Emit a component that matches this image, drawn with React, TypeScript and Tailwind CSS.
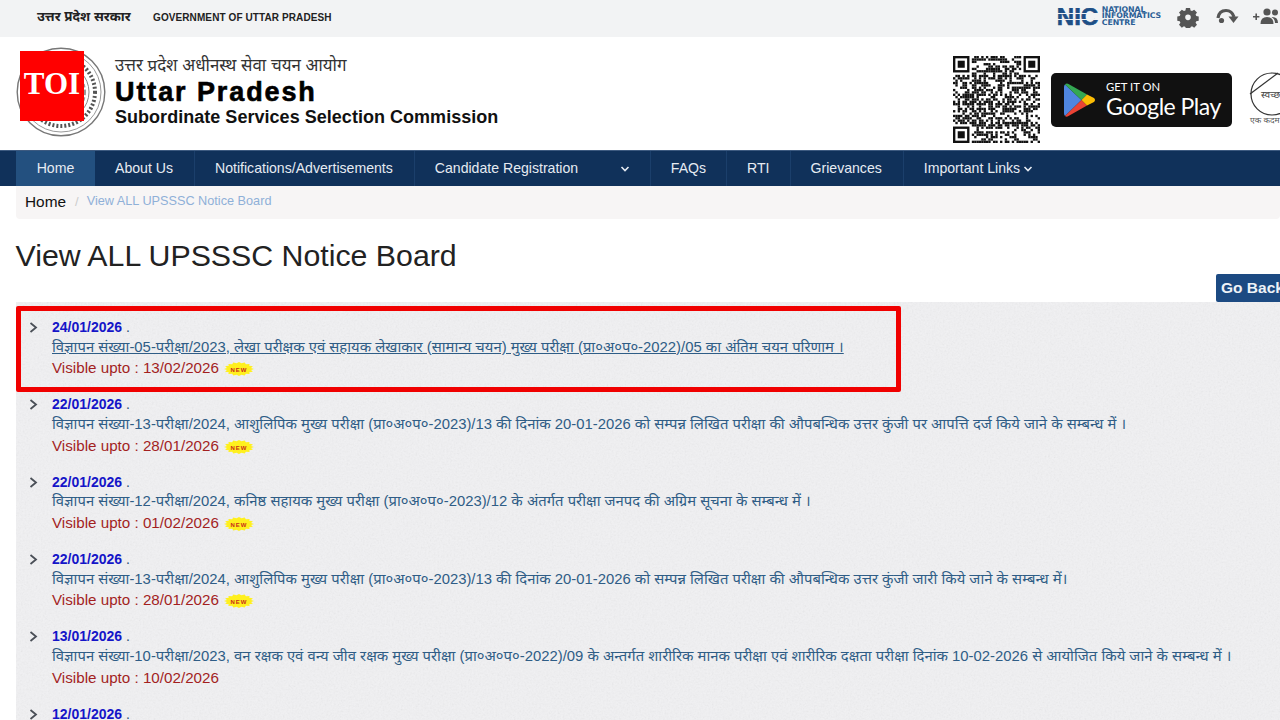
import React from "react";

const FONT = "font-['Liberation_Sans','Noto_Sans','DejaVu_Sans',sans-serif]";

const notices = [
  { date: "24/01/2026", text: "विज्ञापन संख्या-05-परीक्षा/2023, लेखा परीक्षक एवं सहायक लेखाकार (सामान्य चयन) मुख्य परीक्षा (प्रा०अ०प०-2022)/05 का अंतिम चयन परिणाम ।", upto: "13/02/2026", isNew: true, underline: true },
  { date: "22/01/2026", text: "विज्ञापन संख्या-13-परीक्षा/2024, आशुलिपिक मुख्य परीक्षा (प्रा०अ०प०-2023)/13 की दिनांक 20-01-2026 को सम्पन्न लिखित परीक्षा की औपबन्धिक उत्तर कुंजी पर आपत्ति दर्ज किये जाने के सम्बन्ध में ।", upto: "28/01/2026", isNew: true },
  { date: "22/01/2026", text: "विज्ञापन संख्या-12-परीक्षा/2024, कनिष्ठ सहायक मुख्य परीक्षा (प्रा०अ०प०-2023)/12 के अंतर्गत परीक्षा जनपद की अग्रिम सूचना के सम्बन्ध में ।", upto: "01/02/2026", isNew: true },
  { date: "22/01/2026", text: "विज्ञापन संख्या-13-परीक्षा/2024, आशुलिपिक मुख्य परीक्षा (प्रा०अ०प०-2023)/13 की दिनांक 20-01-2026 को सम्पन्न लिखित परीक्षा की औपबन्धिक उत्तर कुंजी जारी किये जाने के सम्बन्ध में।", upto: "28/01/2026", isNew: true },
  { date: "13/01/2026", text: "विज्ञापन संख्या-10-परीक्षा/2023, वन रक्षक एवं वन्य जीव रक्षक मुख्य परीक्षा (प्रा०अ०प०-2022)/09 के अन्तर्गत शारीरिक मानक परीक्षा एवं शारीरिक दक्षता परीक्षा दिनांक 10-02-2026 से आयोजित किये जाने के सम्बन्ध में ।", upto: "10/02/2026" },
  { date: "12/01/2026", text: "", upto: "" },
];

function Chevron({ className = "" }: { className?: string }) {
  return (
    <svg viewBox="0 0 10 10" className={className} fill="none" stroke="currentColor" strokeWidth="1.6">
      <path d="M1.5 3 L5 6.5 L8.5 3" />
    </svg>
  );
}

function NewBadge() {
  const pts: string[] = [];
  const n = 16;
  for (let i = 0; i < n * 2; i++) {
    const a = (i * Math.PI) / n;
    const r = i % 2 ? 0.82 : 1;
    pts.push(`${15 + 15 * r * Math.cos(a)},${7 + 7 * r * Math.sin(a)}`);
  }
  return (
    <svg width="30" height="14" viewBox="0 0 30 14" className="ml-[5px] mt-[3px]">
      <polygon points={pts.join(" ")} fill="#fff01e" />
      <text x="15" y="9.5" textAnchor="middle" fontSize="6" fontWeight="700" fill="#c92a1a" fontFamily="Liberation Sans" letterSpacing="1">NEW</text>
    </svg>
  );
}

function QR() {
  const size = 37;
  const cells: React.ReactElement[] = [];
  let s = 12345;
  const inFinder = (x: number, y: number) =>
    (x < 8 && y < 8) || (x > size - 9 && y < 8) || (x < 8 && y > size - 9);
  for (let y = 0; y < size; y++) {
    for (let x = 0; x < size; x++) {
      s = (s * 1103515245 + 12345) & 0x7fffffff;
      if (!inFinder(x, y) && (s >> 16) % 100 < 52) {
        cells.push(<rect key={`${x}-${y}`} x={x} y={y} width="1" height="1" />);
      }
    }
  }
  const finder = (x: number, y: number) => (
    <g key={`${x}${y}`}>
      <rect x={x} y={y} width="7" height="7" />
      <rect x={x + 1} y={y + 1} width="5" height="5" fill="#fff" />
      <rect x={x + 2} y={y + 2} width="3" height="3" />
    </g>
  );
  return (
    <svg viewBox={`0 0 ${size} ${size}`} width="87" height="87" fill="#111">
      {cells}
      {finder(0, 0)}
      {finder(size - 7, 0)}
      {finder(0, size - 7)}
    </svg>
  );
}

function PlayLogo() {
  return (
    <svg width="32" height="36" viewBox="0 0 32 36">
      <path d="M1 2.5 L17.5 18 L1 34 Q0 33 0 31 L0 5 Q0 3 1 2.5Z" fill="#4f86e0" />
      <path d="M1 2.5 Q2.5 1 4.5 2 L23 12.5 L17.5 18Z" fill="#34a853" />
      <path d="M1 34 Q2.5 35.5 4.5 34 L23 23.5 L17.5 18Z" fill="#ea4335" />
      <path d="M23 12.5 L30 16 Q32 18 30 20 L23 23.5 L17.5 18Z" fill="#fbbc04" />
    </svg>
  );
}

function Emblem() {
  return (
    <svg width="90" height="90" viewBox="0 0 90 90">
      <circle cx="45" cy="45" r="43.8" fill="#fff" stroke="#777" strokeWidth="1.4" />
      <circle cx="45" cy="45" r="40" fill="none" stroke="#999" strokeWidth="1" />
      <circle cx="45" cy="45" r="34" fill="none" stroke="#555" strokeWidth="4" strokeDasharray="2 2" />
      <circle cx="45" cy="45" r="28" fill="none" stroke="#888" strokeWidth="1" />
      <circle cx="45" cy="45" r="22" fill="none" stroke="#999" strokeWidth="6" strokeDasharray="3 2" />
    </svg>
  );
}

function Swachh() {
  return (
    <svg width="32" height="56" viewBox="0 0 32 56">
      <circle cx="24" cy="22" r="21" fill="none" stroke="#333" strokeWidth="1.2" />
      <path d="M2 22 L30 1" stroke="#333" strokeWidth="1.2" />
      <text x="13" y="26" fontSize="9.5" fill="#444" fontFamily="Noto Sans, sans-serif">स्वच्छ</text>
      <text x="2" y="51" fontSize="8.5" fill="#555" fontFamily="Noto Sans, sans-serif">एक कदम</text>
    </svg>
  );
}

function NicLogo() {
  return (
    <div className="flex items-center gap-[3px]">
      <div className="relative h-[18px] w-[42px] overflow-hidden">
        <span className="block text-[24px] leading-[18px] font-bold text-[#1d4f86] [-webkit-text-stroke:0.6px_#1d4f86]">NIC</span>
        <div className="absolute left-0 right-0 top-[5px] h-px bg-[#f2f3f4]" />
        <div className="absolute left-0 right-0 top-[11px] h-px bg-[#f2f3f4]" />
      </div>
      <div className="text-[7.8px] leading-[6.5px] font-bold text-[#2b5f96] font-['DejaVu_Sans',sans-serif] tracking-[-0.1px]">
        <div>NATIONAL</div>
        <div>INFORMATICS</div>
        <div>CENTRE</div>
      </div>
    </div>
  );
}

function TopIcons() {
  return (
    <div className="flex items-center">
      <svg width="22" height="22" viewBox="0 0 24 24" fill="#555" className="ml-[16px]">
        <path fillRule="evenodd" d="M9.5 1h5l.6 3 1.8.8 2.6-1.7 3.4 3.4-1.7 2.6.8 1.8 3 .6v5l-3 .6-.8 1.8 1.7 2.6-3.4 3.4-2.6-1.7-1.8.8-.6 3h-5l-.6-3-1.8-.8-2.6 1.7-3.4-3.4 1.7-2.6-.8-1.8-3-.6v-5l3-.6.8-1.8L1.1 6.5l3.4-3.4 2.6 1.7 1.8-.8zM12 9a3.4 3.4 0 1 0 0 6.8A3.4 3.4 0 0 0 12 9z" transform="translate(1.2 1.2) scale(.9)" />
      </svg>
      <svg width="24" height="20" viewBox="0 0 24 20" fill="none" className="ml-[16px]">
        <path d="M3 11 Q4 3.5 11 3.5 Q17 3.5 19 10" stroke="#555" strokeWidth="3.2" />
        <path d="M13.5 9.5 L23.5 9.5 L18.5 16Z" fill="#555" />
        <circle cx="6.5" cy="13.5" r="2.6" fill="#555" />
      </svg>
      <svg width="26" height="20" viewBox="0 0 26 20" fill="#555" className="ml-[13px]">
        <path d="M1 9h2.4V6.6H5V9h2.4v1.6H5V13H3.4v-2.4H1z" />
        <circle cx="15" cy="5" r="3.6" />
        <circle cx="23" cy="5.5" r="3" />
        <path d="M8.5 17 Q8.5 10 15 10 Q21.5 10 21.5 17Z" />
        <path d="M19.5 10 Q26 9.5 26 16 L23 16 Q23 12 19.5 10Z" />
      </svg>
    </div>
  );
}

const navItem = "pl-5 pr-[20px] flex items-center h-full border-r border-[#1b3f6b]";
const navItemWide = "pl-5 pr-[21px] flex items-center h-full border-r border-[#1b3f6b]";

export default function App() {
  return (
    <div className={`relative w-[1280px] h-[720px] overflow-hidden bg-white ${FONT}`}>
      {/* top strip */}
      <div className="h-[37px] bg-[#f2f3f4] flex items-center pl-[37px] pr-[0px]">
        <span className="text-[13.4px] font-bold text-[#222] w-[116px] -mt-[3px]">उत्तर प्रदेश सरकार</span>
        <span className="text-[10px] font-bold text-[#222] tracking-[0.1px] -mt-[2px]">GOVERNMENT OF UTTAR PRADESH</span>
        <div className="ml-auto flex items-center -mt-[4px] mr-[2px]">
          <NicLogo />
          <TopIcons />
        </div>
      </div>

      {/* masthead */}
      <div className="h-[113px] flex items-center pl-[16px]">
        <div className="-mt-[4px]"><Emblem /></div>
        <div className="ml-[9px] -mt-[5px]">
          <div className="text-[16.9px] leading-[22px] text-[#333]">उत्तर प्रदेश अधीनस्थ सेवा चयन आयोग</div>
          <div className="text-[27px] leading-[30px] font-bold text-black tracking-[1.9px] [-webkit-text-stroke:0.6px_#000]">Uttar Pradesh</div>
          <div className="text-[18px] leading-[20px] font-bold text-[#111] tracking-[0.03px]">Subordinate Services Selection Commission</div>
        </div>
        <div className="ml-auto flex items-center mt-[12px]">
          <QR />
          <div className="ml-[11px] w-[181px] h-[54px] rounded-[5px] bg-[#111] flex items-center pl-[13px]">
            <PlayLogo />
            <div className="ml-[10px] text-white font-['Lato',sans-serif]">
              <div className="text-[11.3px] leading-[13px]">GET IT ON</div>
              <div className="text-[23px] leading-[27px] tracking-[-0.5px]">Google Play</div>
            </div>
          </div>
          <div className="ml-[16px]"><Swachh /></div>
        </div>
      </div>

      {/* nav */}
      <nav className="h-[36px] bg-[#10315a] flex pl-[16px] text-[14.1px] text-[#e6ebf2] border-t border-[#3d5a80]">
        <div className="w-[79px] flex items-center justify-center bg-[#23507f]">Home</div>
        <div className={navItemWide}>About Us</div>
        <div className={navItemWide}>Notifications/Advertisements</div>
        <div className={`${navItem} w-[236px]`}>
          Candidate Registration
          <Chevron className="ml-auto w-[10px] h-[10px]" />
        </div>
        <div className={navItem}>FAQs</div>
        <div className={navItem}>RTI</div>
        <div className={navItemWide}>Grievances</div>
        <div className="px-5 flex items-center h-full">
          Important Links
          <Chevron className="ml-[3px] w-[10px] h-[10px]" />
        </div>
      </nav>

      {/* breadcrumb */}
      <div className="ml-[16px] h-[33px] rounded-b bg-[#f7f5f5] flex items-center pl-[9px] pb-[1px]">
        <span className="text-[15.4px] text-[#111]">Home</span>
        <span className="ml-[9px] mr-[8px] text-[13px] text-[#ccc]">/</span>
        <span className="text-[#8fb0d8] text-[12.7px]">View ALL UPSSSC Notice Board</span>
      </div>

      {/* title */}
      <h1 className="ml-[15.5px] mt-[18px] text-[30.3px] leading-[38px] font-normal text-[#222]">View ALL UPSSSC Notice Board</h1>

      {/* go back */}
      <div className="flex justify-end -mt-[1px] -mr-[16px]">
        <button className="w-[80px] h-[28px] rounded-tl-[2px] rounded-bl-[2px] bg-[#1c4a82] text-[#eef2f7] font-bold text-[15.5px] text-left pl-[5px]">Go Back</button>
      </div>

      {/* notices */}
      <div className="relative ml-[16px] bg-[#f1f1f3] h-[420px] pt-[17px] overflow-hidden">
        <svg className="absolute inset-0 w-full h-full opacity-[0.13]" aria-hidden="true">
          <filter id="grain">
            <feTurbulence type="fractalNoise" baseFrequency="0.55" numOctaves="2" seed="4" />
            <feColorMatrix type="saturate" values="0" />
          </filter>
          <rect width="100%" height="100%" filter="url(#grain)" />
        </svg>
        {notices.map((n, i) => (
          <div key={i} className="relative flex h-[77.33px] pl-[13px]">
            <svg width="9" height="11" viewBox="0 0 9 11" fill="none" stroke="#4a4f57" strokeWidth="1.8" className="mt-[3px]">
              <path d="M1.5 1 L7 5.5 L1.5 10" />
            </svg>
            <div className="ml-[14px]">
              <div className="font-bold text-[14px] leading-[17.6px] text-[#1515c8]">
                {n.date} <span className="font-normal text-[#2c4f78]">.</span>
              </div>
              <div className={`text-[14.85px] leading-[20.6px] text-[#2f5d86] whitespace-nowrap ${n.underline ? "underline" : ""}`}>{n.text}</div>
              {n.upto && (
                <div className="flex items-center text-[15.2px] leading-[21.5px] text-[#a31f1f]">
                  <span>Visible upto : {n.upto}</span>
                  {n.isNew && <NewBadge />}
                </div>
              )}
            </div>
          </div>
        ))}
      </div>

      {/* overlays */}
      <div className="absolute left-[20px] top-[51px] w-[64px] h-[70px] bg-[#ff0000] flex items-center justify-center pb-[5px]">
        <span className="font-['Liberation_Serif',serif] text-white font-bold text-[31px] leading-none">TOI</span>
      </div>
      <div className="absolute left-[16px] top-[306px] w-[885px] h-[86px] border-[5px] border-[#f00000] rounded-[2px]" />
    </div>
  );
}
